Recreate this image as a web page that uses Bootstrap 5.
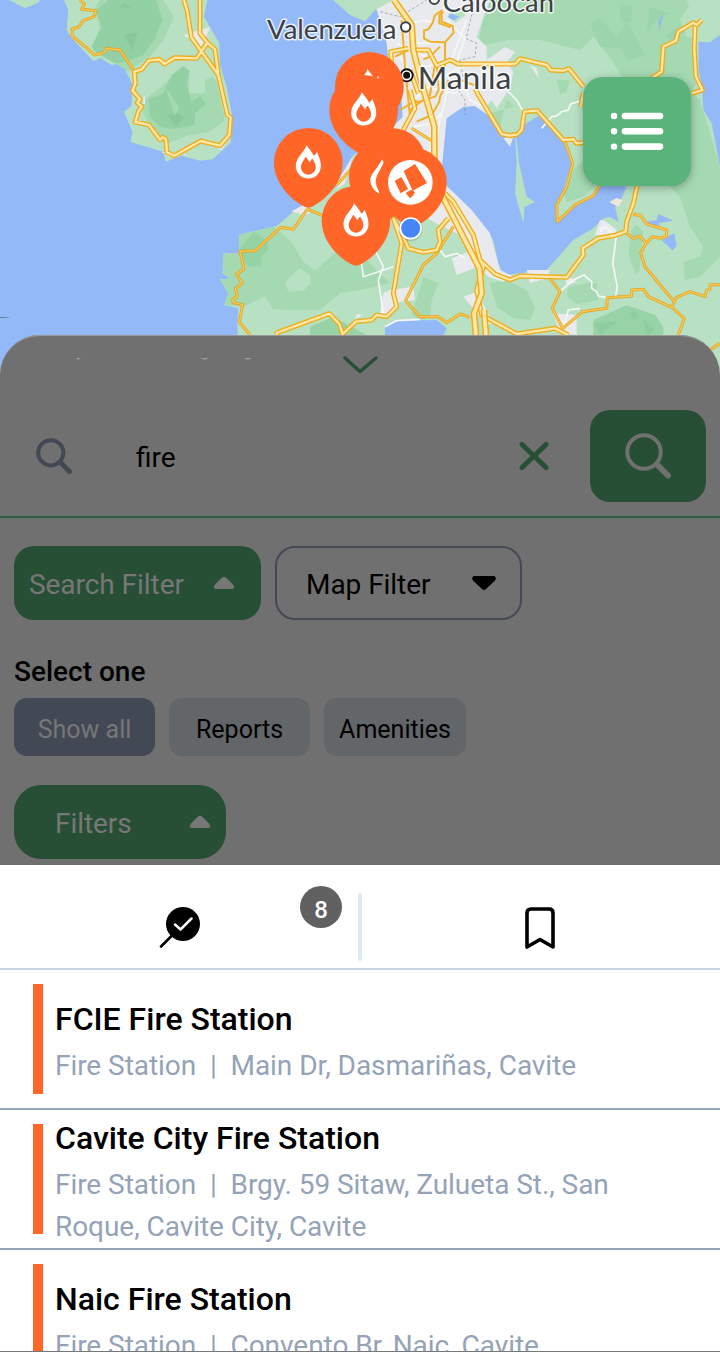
<!DOCTYPE html>
<html lang="en">
<head>
<meta charset="utf-8">
<meta name="viewport" content="width=device-width, initial-scale=1">
<title>Nearby stations</title>
<link href="https://cdn.jsdelivr.net/npm/bootstrap@5.3.0/dist/css/bootstrap.min.css" rel="stylesheet">
<style>
body{font-family:Roboto,"Liberation Sans",sans-serif;color:#000;font-size:28px;line-height:42px}
.screen{width:720px;height:1352px}
.map-area{height:380px;margin-bottom:-45px}
.map-label{font-family:Lato,sans-serif;fill:#3c4146;stroke:#fff;stroke-opacity:.8;stroke-width:9;paint-order:stroke;stroke-linejoin:round}
.menu-btn{top:77px;right:29px;width:108px;height:109px;border-radius:20px;background:#59b37b;box-shadow:0 2px 9px rgba(0,0,0,.3);padding:0 0 2px}
.sheet{height:530px;background:#707070;border-radius:40px 40px 0 0}
.sheet::before{content:"";position:absolute;inset:0 0 auto;height:60px;border-radius:40px 40px 0 0;border-top:1px solid #999}
.grip{height:75px;padding-top:20px}
.search-row{height:108px;border-bottom:2px solid #2d5f40;padding:0 14px 15px 35px}
.go{width:116px;height:92px;border-radius:20px;background:#274f36}
.query{margin-left:63px;width:382px;padding-top:4px}
.green{background:#274f36;color:#777}
.drop-row{padding:28px 14px 0;gap:14px}
.drop{height:74px;border-radius:20px;letter-spacing:-.05px}
.drop-search{width:247px;padding:4px 26px 0 15px}
.drop-map{width:247px;padding:4px 24px 0 29px;border:2px solid #444a55}
.drop-filters{width:212px;border-radius:27px;padding:4px 15px 0 41px}
.drop svg{margin-bottom:4px}
.chips{padding:5px 14px 0;gap:14px}
.chip{width:141px;height:58px;border-radius:13px;font-size:25px;background:#626669;padding-top:6px}
.chip:last-child{width:142px}
.chip.on{background:#424954;color:#777}
.med{font-weight:500}
.tabs-row{height:105px;border-bottom:2px solid #cbd5e1}
.tab-item{flex:1 1 0}
.tab-item svg{margin-top:41px}
.divider{width:4px;height:68px;border-radius:2px;background:#e2e8f0;margin-top:28px}
.count{top:21px;left:300px;width:42px;height:42px;background:#616161;color:#fff;font-size:24px;padding-top:5px}
.station{height:140px;border-bottom:2px solid #94a3b8;padding-left:33px;padding-right:60px}
.stripe{width:10px;height:110px;background:#ff6628}
.station-text{padding:3px 0 0 4px}
.station h2{font-size:32px;line-height:51px;font-weight:500}
.station p{color:#94a3b8;white-space:pre-wrap;letter-spacing:-.05px}
.end-line{height:1px;background:#777;bottom:0}
</style>
</head>
<body>
<main class="screen d-flex flex-column overflow-hidden position-relative bg-white">
<section class="map-area flex-shrink-0 position-relative">
<svg class="d-block" width="720" height="380" viewBox="0 0 2160 1140">
<defs>
<g id="pin"><path fill="#ff6628" d="M0 0A103 103 0 0 1 103 103C103 162 60 210 14 235Q0 243-14 235C-60 210-103 162-103 103A103 103 0 0 1 0 0Z"/></g>
<g id="flame"><use href="#pin"/><path fill="#fff" stroke="#f25010" stroke-width="2" d="M-6 49C-12 74-39 86-39 114A39 39 0 0 0 39 114C39 96 31 84 27 70L17 82C10 68 2 62-6 49Z"/><path fill="#ff6628" stroke="#f05014" stroke-width="2" d="M-8 88C-12 99-21 104-21 118A21 21 0 0 0 21 118C21 107 15 100 12 93L4 104Z"/></g>
</defs>
<rect width="2160" height="1140" fill="#93b9f8"/>
<!-- Bataan -->
<path fill="#b8e1c4" d="M28 0L75 25L115 8L120 0ZM192 0L205 30L200 90L215 115L280 183L302 174L335 195L365 188L398 255L394 318L372 335L397 395L392 426L490 455L497 485L545 467L600 482L638 478L692 428L697 350L680 260L660 195L658 130L612 50L622 0Z"/>
<path fill="#a4d9b1" d="M300 0H490L522 52L490 120L455 165L385 215L345 190L278 150L300 80L283 25ZM425 325L440 295L490 255L545 200L568 215V280H615V240L635 230L650 245L675 362L625 397L560 407L500 432L450 390Z"/>
<path fill="#93d1a4" d="M325 0H468L488 60L462 120L430 165L380 185L345 190L290 160L275 140L304 80L288 32ZM445 300L490 280L515 225L550 198L568 212L560 255L575 305L600 288L617 312L585 340V375L520 387L480 380L450 350Z"/>
<path fill="#89c99a" d="M370 105L412 95L398 152ZM352 22L375 8L395 24ZM530 340L552 352L530 378L500 345Z"/>
<path fill="#a4d9b1" d="M498 262L538 325L525 345L512 310Z"/>
<path fill="#e8eaed" d="M550 108L580 95L630 82L618 112L600 148L578 118ZM650 443L685 415L665 450ZM485 456L530 456L510 472ZM550 458L562 468L552 464ZM430 290H435V312H430Z"/>
<!-- mainland -->
<path fill="#b8e1c4" d="M1000 0L1050 45L1095 64L1128 28L1160 80L1170 190L1200 270L1210 360L1180 395L1060 465L1035 545L880 635L830 678L717 704V760H670L668 820L690 836L660 838L685 880L672 915L715 925L712 970L718 1140H2160V0Z"/>
<path fill="#a4d9b1" d="M1475 0L1445 40V90L1427 140L1525 120H1620L1740 150L1780 110L1835 180L1866 232L1980 260L2060 270L2100 300L2160 500V770L2100 830L2055 840L2050 785L2100 770L2110 740L2070 680L2040 590L1990 540L1960 450L2090 250L2082 120L2095 90L2060 0ZM717 704L820 680L870 720L910 785L945 812L1010 755L1080 760L1170 850L1080 870L1020 880L960 930L880 930L820 935L795 890L730 920L672 915L685 880L660 838L690 836L668 820L670 760H718Z"/>
<path fill="#b8e1c4" d="M2080 0H2160V120L2128 128L2100 118L2060 110L2040 60ZM730 920L795 890L820 928L880 930L932 975V1005H718V950Z"/>
<path fill="#a4d9b1" d="M1690 580L1725 500L1760 480L1800 550L1750 590L1700 605ZM1895 690L1910 675L1930 695L1918 815L1905 820L1885 760ZM1270 830L1315 850L1295 900L1290 950L1260 960L1235 945ZM1470 848L1520 842L1580 870L1605 925L1590 960L1540 955L1490 920ZM1705 860L1760 850L1790 850L1796 900L1730 912L1700 890ZM1670 240L1710 240L1700 275L1680 282ZM1440 340L1495 400L1520 300L1545 320L1490 335Z"/>
<path fill="#93d1a4" d="M720 745L760 696L800 720L805 750L783 770L785 798L745 800L725 775ZM1780 960L1880 916L1965 945L1990 980V1005H1780ZM930 980L1000 950L1100 1005H930Z" opacity=".9"/>
<path fill="#96d0a6" opacity=".55" d="M1770 70L1800 55L1850 110L1880 70L1900 100L1935 165L1885 180L1860 145L1800 140ZM1860 10L1900 20L1890 70L1860 60ZM1950 20L2010 40L1960 70L1940 100ZM2000 110L2040 70L2020 130Z"/>
<path fill="#b8e1c4" d="M870 830L900 805L930 825L933 850L910 872L865 875L855 850Z"/>
<path fill="#89c99a" opacity=".6" d="M1780 970L1850 965L1800 1005ZM1890 940L1905 932L1915 950L1900 955ZM1930 960L1965 990L1940 1005ZM1570 0L1610 5L1600 25Z"/>
<!-- eastern water -->
<path fill="#93b9f8" d="M2095 125L2130 127L2160 105V500L2135 370L2110 330L2107 270L2096 210ZM1340 50L1350 38L1400 45L1360 65ZM1975 65L1990 38L1978 95Z"/>
<path fill="#93b9f8" d="M1315 470L1325 360L1390 320L1425 318L1480 355L1520 420L1550 400L1570 375L1620 345L1680 400L1715 490L1690 570L1670 610L1672 668L1720 615L1780 585L1810 540L1880 560L1860 605L1845 620L1855 665L1830 650L1810 655L1780 685L1720 720L1640 810L1510 825L1495 790L1480 720L1455 685L1415 640L1345 590L1315 550Z"/>
<path fill="#b8e1c4" d="M1545 398L1550 490L1545 580L1570 670L1574 620L1605 606L1580 590L1557 490L1548 400Z"/>
<path fill="#93b9f8" d="M1155 980L1190 962L1310 960L1340 985L1330 1006H1155ZM1935 665L1970 660L1975 642L2020 662L1975 670L1980 680ZM1985 720L2022 700L2030 735L2018 752Z"/>
<!-- built up areas -->
<path fill="#e8eaed" d="M1130 28L1180 0H1470L1430 110L1460 140V180L1515 142L1545 155L1520 188L1540 215L1530 265L1490 325L1475 300L1455 325L1470 350L1425 318L1390 320L1340 355L1322 540L1415 630L1470 700L1500 810L1540 830L1510 845L1465 830L1410 775L1380 705L1290 660L1255 600L1220 480L1160 400L1208 350L1205 290L1170 230L1160 130Z"/>
<path fill="#b8e1c4" d="M1345 35L1400 20L1395 48L1365 68Z"/><path fill="#93b9f8" d="M1342 50L1352 40L1378 50L1360 62Z"/>
<path fill="#e8eaed" d="M1060 465L1035 550L1010 568L1015 540ZM875 634L920 610L930 640L910 645ZM1355 775L1420 750L1435 800L1370 825ZM1390 890L1430 875L1480 970L1460 975ZM1150 880L1170 870L1240 860L1245 900L1200 905L1165 945L1140 940ZM1660 940L1730 945V1005L1680 1000ZM1070 942L1090 944L1065 958ZM1785 705L1800 660L1815 662L1850 690L1838 710ZM1695 830L1710 830L1730 845L1700 855ZM1580 810H1650L1640 835L1590 850ZM1590 196L1610 205L1616 235ZM1510 415L1540 410L1530 440Z"/>
<path fill="#f0e7d5" d="M1828 606L1850 594L1868 600L1855 620Z"/>
<!-- minor roads -->
<g fill="none" stroke="#f6f7f7" stroke-width="5">
<path d="M1520 270L1550 300L1570 335M1625 385L1655 350L1670 348L1685 335L1705 330L1712 312L1745 302M1120 740L1150 800L1135 840L1150 940M1080 760L1090 830L1180 800M1850 700L1838 790L1852 860L1846 893M1680 875L1720 840L1752 825L1775 845V865L1790 875L1795 888L1820 893M1155 980L1190 962L1260 958M1320 750L1335 770L1370 760L1395 775M1690 985L1705 930L1740 925M1800 700L1805 685L1820 682L1835 700"/>
<path d="M1240 70L1270 60L1300 68M1190 130L1290 175L1340 250M1270 200L1350 190L1400 60M1240 300L1300 250L1380 200M1350 240L1305 420L1270 480M1270 260L1360 280L1430 250M1200 170L1290 310M1250 130L1345 125M1340 60L1395 115L1370 185M1320 260L1400 190L1450 200M1340 240L1390 250L1410 300L1450 320M1240 380L1300 370L1330 330"/>
</g>
<g fill="none" stroke="#888d93" stroke-width="2" stroke-dasharray="9 6"><path d="M1140 35L1200 50L1280 0M1460 0L1415 45L1398 115L1430 130L1425 170L1380 180L1390 235M1375 270L1395 300V345"/></g>
<!-- secondary roads -->
<g fill="none" stroke="#e3a61f" stroke-width="9" stroke-linejoin="round"><path id="thin" d="M240 0L253 12L245 28L288 32L282 50L250 62L235 82L217 86L216 108L262 145L283 165L312 158L320 145L360 150L402 213M1060 500L1010 555M922 627L880 688L842 682L766 752L720 754L732 806L710 822L726 850L706 866L712 888L698 900L700 908L728 914L718 967L750 1005M922 627L975 650M1215 905L1270 795L1310 760L1360 680M1220 905L1260 950L1315 950L1340 968L1380 942L1410 952M1650 835L1680 875L1657 925L1688 985L1748 935L1820 925L1822 893L1895 888V870L1930 868L1945 890L2015 922L2053 955L2035 1005M1880 700L1900 715L1920 708L1938 730L1958 710L1980 715L2000 708V690L1940 672L1920 645L1905 645L1900 640M1938 730L1922 758L1935 800L2023 905L2015 922M2023 905L2030 892L2070 875L2115 890L2120 870L2130 868V854H2160M2130 1050L2160 1030M1695 425L1718 490L1700 560L1670 615L1672 665L1725 615L1780 587L1800 555M1235 385L1300 425"/></g>
<g fill="none" stroke="#fac957" stroke-width="4" stroke-linejoin="round"><use href="#thin"/></g>
<g fill="none" stroke="#f2b02a" stroke-width="6" stroke-linejoin="round"><path d="M1270 92L1285 88L1298 68L1305 45L1325 32V65L1358 78L1361 98L1335 127V200M1330 35L1318 45V70L1352 82M1272 92V115L1290 125L1335 127M1320 140L1290 170L1270 178M1305 190L1290 285L1230 330M1310 190L1316 270L1305 290L1240 310M1345 240L1320 290L1318 305L1295 345L1250 365M1205 60L1215 200L1230 350M1185 170L1225 150M1200 330L1250 300M1380 240L1430 258"/></g>
<!-- primary roads -->
<g fill="none" stroke="#f0ac18" stroke-width="15" stroke-linejoin="round"><path id="main" d="M552 0L562 35L574 112L655 225L682 345L692 353L688 405L660 437L602 423L523 467L501 457L498 418L488 412L480 419L447 375L406 366L415 335L425 320L412 308L420 298L398 272L406 250L403 215L425 208L446 182L478 178L494 192L524 173L590 175L622 128L645 148L655 225M600 0V100L622 128M828 1005L832 998L988 941L1018 972L1028 1002L1068 965L1115 960L1130 945L1160 950L1190 920L1180 880L1205 730L1180 655L1210 710L1225 745L1270 757L1310 750L1320 725L1315 690L1345 655M1240 150H1285L1310 197L1350 180L1375 192H1545L1560 176L1640 195L1652 210L1690 212L1707 206L1750 260M1425 265L1435 285L1505 402L1530 407L1552 403L1565 390L1573 335L1612 332L1690 420L1720 418L1730 430L1750 428M1742 320L1750 280M1955 235L1985 215L1990 140L2028 122L2035 95L2080 68L2090 75L2105 60M2085 80L2083 150L2088 230L2107 270L2075 280M1912 555L1900 610L1880 665L1877 695L1845 706L1795 715L1748 745L1750 765L1700 832L1560 828L1530 840L1485 822L1440 780L1420 705L1360 605L1335 580M1440 780L1450 800L1430 870L1445 945L1550 1002L1665 985L1705 1005M1210 390L1245 325L1230 270M1175 185L1172 155L1225 145M1230 210L1255 280"/></g>
<g fill="none" stroke="#ffe7a7" stroke-width="7" stroke-linejoin="round"><use href="#main"/></g>
<path fill="none" stroke="#f0ac18" stroke-width="20" d="M1182 0L1235 75L1240 150L1265 250L1303 380V540L1438 805L1445 880L1422 940L1428 1005M1452 930L1458 1005"/>
<path fill="none" stroke="#ffe7a7" stroke-width="11" d="M1182 0L1235 75L1240 150L1265 250L1303 380V540L1438 805L1445 880L1422 940L1428 1005M1452 930L1458 1005"/>
<path fill="#66798f" d="M0 951H12L32 952L12 954H0Z"/>
<text class="map-label" x="801" y="116" font-size="83" textLength="388" lengthAdjust="spacingAndGlyphs">Valenzuela</text>
<text class="map-label" x="1328" y="37" font-size="83" textLength="334" lengthAdjust="spacingAndGlyphs">Caloocan</text>
<text class="map-label" x="1253" y="266" font-size="93" textLength="281" lengthAdjust="spacingAndGlyphs">Manila</text>
<g fill="#fff" stroke="#3c4146" stroke-width="6"><circle cx="1217" cy="81" r="14"/><circle cx="1303" cy="-2" r="14"/></g>
<circle cx="1220" cy="226" r="21" fill="#111"/><circle cx="1220" cy="226" r="13" fill="none" stroke="#fff" stroke-width="5"/>
<use href="#flame" x="1108" y="156"/>
<use href="#flame" x="1091" y="225"/>
<use href="#flame" x="925" y="384"/>
<use href="#pin" x="1175" y="384"/>
<use href="#pin" x="1150" y="426"/>
<path fill="#fff" d="M1145 479L1150 484V496C1136 515 1128 530 1127 546Q1128 560 1138 575V581C1121 572 1111 556 1111 540C1111 520 1135 503 1145 479Z"/>
<g transform="translate(1237 443)"><use href="#pin"/><g transform="translate(-6 104)"><circle r="67" fill="#fff"/><path fill="#ff6628" d="M-20-34L14-55L50 2L7 25ZM-47-4L-27-16L-7 20L-29 33ZM-14 32L3 22L14 29L10 38L-1 48Z"/></g></g>
<use href="#flame" x="1068" y="558"/>
<circle cx="1232" cy="688" r="36" opacity=".12"/><circle cx="1232" cy="685" r="31" fill="#4486f5" stroke="#fff" stroke-width="5"/>
</svg>
<button class="menu-btn btn border-0 position-absolute d-flex align-items-center justify-content-center" aria-label="List">
<svg width="54" height="40" viewBox="0 0 54 40" stroke="#fff" stroke-linecap="round"><path stroke-width="6.6" d="M15 5H50M15 20.3H50M15 35.6H50"/><path stroke-width="6.4" d="M4 5H4.1M4 20.3H4.1M4 35.6H4.1"/></svg>
</button>
</section>
<section class="sheet flex-shrink-0 position-relative">
<div class="grip text-center d-flex justify-content-center align-items-start"><svg width="38" height="20" fill="none" stroke="#274f36" stroke-width="3.5" stroke-linecap="round" stroke-linejoin="round"><path d="M4 3L19 16.500L35 3"/></svg></div>
<svg class="position-absolute top-0 start-0" width="260" height="30" fill="#999"><path d="M76 23H81L78 25ZM200 23H209L205 25ZM243 23H252L248 25Z"/></svg>
<div class="search-row d-flex align-items-center">
<svg width="38" height="38" fill="none" stroke="#424954" stroke-width="4"><circle cx="15.800" cy="15.800" r="12.600"/><path stroke-width="5" stroke-linecap="round" d="M26 26L34.500 34.500"/></svg>
<span class="query">fire</span>
<svg width="32" height="30" fill="none" stroke="#274f36" stroke-width="5" stroke-linecap="round"><path d="M4 3.500L28 26.500M28 3.500L4 26.500"/></svg>
<button class="go btn border-0 p-0 ms-auto" aria-label="Search"><svg width="46" height="48" viewBox="0 0 46 48" fill="none" stroke="#707070" stroke-width="4"><circle cx="19" cy="20" r="16.700"/><path stroke-width="6" stroke-linecap="round" d="M32 32.500L43 43.500"/></svg></button>
</div>
<div class="drop-row d-flex">
<div class="drop drop-search green d-flex align-items-center"><span>Search Filter</span><svg class="ms-auto" width="22" height="14"><path fill="#777" d="M9 1.500Q11 0 13 1.500L20.500 9Q22 13 19 13H3Q0 13 1.500 9Z"/></svg></div>
<div class="drop drop-map d-flex align-items-center"><span>Map Filter</span><svg class="ms-auto" width="24" height="16"><path d="M1.500 1H22.500Q25 3 23 5.500L14 14Q12 16 10 14L1 5.500Q-1 3 1.500 1Z"/></svg></div>
</div>
<div class="med" style="padding:31px 14px 0">Select one</div>
<div class="chips d-flex">
<div class="chip on d-flex align-items-center justify-content-center">Show all</div>
<div class="chip d-flex align-items-center justify-content-center">Reports</div>
<div class="chip d-flex align-items-center justify-content-center">Amenities</div>
</div>
<div style="padding:29px 14px 0"><div class="drop drop-filters green d-flex align-items-center"><span>Filters</span><svg class="ms-auto" width="22" height="14"><path fill="#777" d="M9 1.500Q11 0 13 1.500L20.500 9Q22 13 19 13H3Q0 13 1.500 9Z"/></svg></div></div>
</section>
<section class="flex-shrink-0">
<div class="tabs-row d-flex position-relative">
<div class="tab-item d-flex justify-content-center"><svg width="42" height="42" fill="none"><circle cx="25" cy="18" r="17" fill="#000"/><path stroke="#000" stroke-width="2.600" stroke-linecap="round" d="M3 40.500L15 28.500"/><path stroke="#fff" stroke-width="2.500" stroke-linecap="round" stroke-linejoin="round" d="M17 18.500L22.500 23.500L33.500 12.500"/></svg></div>
<span class="count position-absolute rounded-circle med d-flex align-items-center justify-content-center">8</span>
<div class="divider"></div>
<div class="tab-item d-flex justify-content-center"><svg width="32" height="44" fill="none" stroke="#000" stroke-width="3.600" stroke-linejoin="round"><path d="M2 41V7Q2 3 6 3H24Q28 3 28 7V41L15 33.500Z"/></svg></div>
</div>
<article class="station d-flex align-items-center gap-2"><div class="stripe flex-shrink-0"></div><div class="station-text"><h2 class="m-0">FCIE Fire Station</h2><p class="m-0">Fire Station  |  Main Dr, Dasmariñas, Cavite</p></div></article>
<article class="station d-flex align-items-center gap-2"><div class="stripe flex-shrink-0"></div><div class="station-text"><h2 class="m-0">Cavite City Fire Station</h2><p class="m-0">Fire Station  |  Brgy. 59 Sitaw, Zulueta St., San Roque, Cavite City, Cavite</p></div></article>
<article class="station d-flex align-items-center gap-2"><div class="stripe flex-shrink-0"></div><div class="station-text"><h2 class="m-0">Naic Fire Station</h2><p class="m-0">Fire Station  |  Convento Br, Naic, Cavite</p></div></article>
</section>
<div class="end-line position-absolute w-100"></div>
</main>
<script src="https://cdn.jsdelivr.net/npm/bootstrap@5.3.0/dist/js/bootstrap.bundle.min.js"></script>
</body>
</html>
